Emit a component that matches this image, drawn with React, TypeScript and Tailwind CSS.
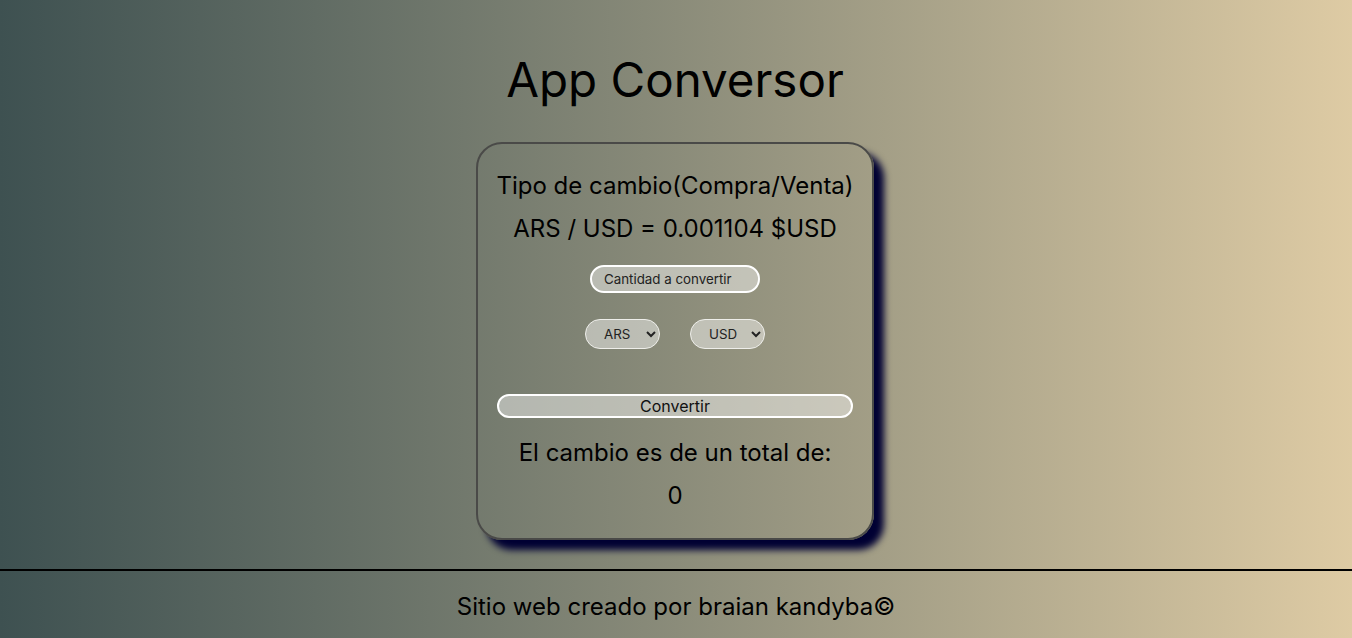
import React from "react";

export default function App() {
  return (
    <div
      className="min-h-[638px] w-full flex flex-col bg-gradient-to-r from-[#3e5151] to-[#decba4] text-black"
      style={{ fontFamily: "Inter, 'Noto Sans', sans-serif" }}
    >
      <main className="flex flex-col items-center">
        <h1 className="mt-[56px] mr-[2px] text-[47.5px] leading-[48px] font-normal">App Conversor</h1>
        <div className="mt-[38px] mr-[2px] w-[398px] h-[398px] rounded-[26px] border-2 border-[#4a4a48] shadow-[10px_10px_7px_#000033] flex flex-col items-center pt-[27px]">
          <p className="text-[24px] leading-[30px]">Tipo de cambio(Compra/Venta)</p>
          <p className="mt-[13px] text-[24px] leading-[30px]">ARS / USD = 0.001104 $USD</p>
          <input
            type="text"
            placeholder="Cantidad a convertir"
            className="mt-[21px] w-[170px] h-[28px] rounded-full border-2 border-white bg-[rgba(255,255,255,0.45)] px-[12px] text-[13.33px] placeholder:text-[#222] outline-none"
          />
          <div className="mt-[26px] flex gap-[30px]">
            <select className="w-[75px] h-[30px] rounded-full border border-[#eeeeea] bg-[rgba(255,255,255,0.45)] pl-[14px] pr-[6px] text-[13.33px] text-[#222]">
              <option>ARS</option>
            </select>
            <select className="w-[75px] h-[30px] rounded-full border border-[#eeeeea] bg-[rgba(255,255,255,0.45)] pl-[14px] pr-[6px] text-[13.33px] text-[#222]">
              <option>USD</option>
            </select>
          </div>
          <button className="mt-[45px] w-[356px] h-[24px] rounded-full border-2 border-white bg-[rgba(255,255,255,0.45)] text-[16px] leading-[20px] text-[#111]">
            Convertir
          </button>
          <p className="mt-[20px] text-[24px] leading-[30px]">El cambio es de un total de:</p>
          <p className="mt-[13px] text-[24px] leading-[30px]">0</p>
        </div>
      </main>
      <footer className="mt-[29px] border-t-2 border-black flex justify-center pt-[21px] pb-[14px]">
        <p className="text-[24px] leading-[30px]">Sitio web creado por braian kandyba©</p>
      </footer>
    </div>
  );
}
